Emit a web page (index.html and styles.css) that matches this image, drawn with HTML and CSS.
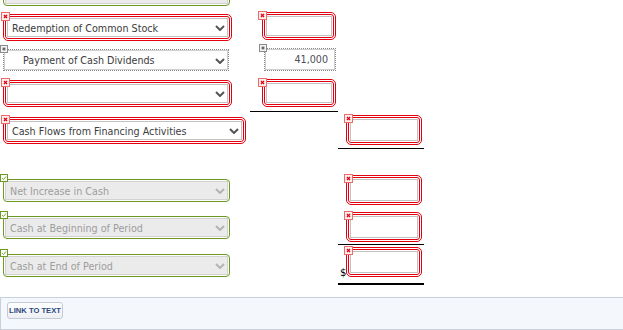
FILE: index.html
```html
<!DOCTYPE html>
<html lang="en">
<head>
    <meta charset="UTF-8">
    <title>Financing Activities</title>
    <link rel="stylesheet" href="styles.css">
</head>
<body>
    <div class="sheet">
        <div class="row r0">
            <div class="cell left">
                <div class="box ok w227 peek">
                    <div class="select dis"><span></span><svg class="chev" width="10" height="6" viewBox="0 0 10 6"><polyline points="1,1 5,5 9,1"/></svg></div>
                </div>
            </div>
        </div>

        <div class="row r1">
            <div class="cell left">
                <div class="box bad w229">
                    <i class="mark red"><svg viewBox="0 0 9 9"><path d="M2.5 2.5l4 4M6.5 2.5l-4 4"/></svg></i>
                    <div class="ring"><div class="select"><span>Redemption of Common Stock</span><svg class="chev" width="10" height="6" viewBox="0 0 10 6"><polyline points="1,1 5,5 9,1"/></svg></div></div>
                </div>
            </div>
            <div class="cell mid">
                <div class="box bad num">
                    <i class="mark red"><svg viewBox="0 0 9 9"><path d="M2.5 2.5l4 4M6.5 2.5l-4 4"/></svg></i>
                    <div class="ring"><div class="field"></div></div>
                </div>
            </div>
        </div>

        <div class="row r2">
            <div class="cell left">
                <div class="box dot w226">
                    <i class="mark grey"><svg viewBox="0 0 7 7"><path d="M2 2l3 3M5 2l-3 3"/></svg></i>
                    <div class="select indent"><span>Payment of Cash Dividends</span><svg class="chev" width="10" height="6" viewBox="0 0 10 6"><polyline points="1,1 5,5 9,1"/></svg></div>
                </div>
            </div>
            <div class="cell mid">
                <div class="box dot numdot">
                    <i class="mark grey"><svg viewBox="0 0 7 7"><path d="M2 2l3 3M5 2l-3 3"/></svg></i>
                    <div class="field filled">41,000</div>
                </div>
            </div>
        </div>

        <div class="row r3">
            <div class="cell left">
                <div class="box bad w229">
                    <i class="mark red"><svg viewBox="0 0 9 9"><path d="M2.5 2.5l4 4M6.5 2.5l-4 4"/></svg></i>
                    <div class="ring"><div class="select"><span></span><svg class="chev" width="10" height="6" viewBox="0 0 10 6"><polyline points="1,1 5,5 9,1"/></svg></div></div>
                </div>
            </div>
            <div class="cell mid total">
                <div class="box bad num">
                    <i class="mark red"><svg viewBox="0 0 9 9"><path d="M2.5 2.5l4 4M6.5 2.5l-4 4"/></svg></i>
                    <div class="ring"><div class="field"></div></div>
                </div>
            </div>
        </div>

        <div class="row r4">
            <div class="cell left">
                <div class="box bad w243">
                    <i class="mark red"><svg viewBox="0 0 9 9"><path d="M2.5 2.5l4 4M6.5 2.5l-4 4"/></svg></i>
                    <div class="ring"><div class="select"><span>Cash Flows from Financing Activities</span><svg class="chev" width="10" height="6" viewBox="0 0 10 6"><polyline points="1,1 5,5 9,1"/></svg></div></div>
                </div>
            </div>
            <div class="cell mid"></div>
            <div class="cell right total">
                <div class="box bad sum">
                    <i class="mark red"><svg viewBox="0 0 9 9"><path d="M2.5 2.5l4 4M6.5 2.5l-4 4"/></svg></i>
                    <div class="ring"><div class="field"></div></div>
                </div>
            </div>
        </div>

        <div class="spacer"></div>

        <div class="row r5">
            <div class="cell left">
                <div class="box ok w227">
                    <i class="mark green"><svg viewBox="0 0 8 8"><path d="M1.5 4.2l1.8 1.8 3.4-4"/></svg></i>
                    <div class="select dis"><span>Net Increase in Cash</span><svg class="chev" width="10" height="6" viewBox="0 0 10 6"><polyline points="1,1 5,5 9,1"/></svg></div>
                </div>
            </div>
            <div class="cell mid"></div>
            <div class="cell right">
                <div class="box bad sum">
                    <i class="mark red"><svg viewBox="0 0 9 9"><path d="M2.5 2.5l4 4M6.5 2.5l-4 4"/></svg></i>
                    <div class="ring"><div class="field"></div></div>
                </div>
            </div>
        </div>

        <div class="row r6">
            <div class="cell left">
                <div class="box ok w227">
                    <i class="mark green"><svg viewBox="0 0 8 8"><path d="M1.5 4.2l1.8 1.8 3.4-4"/></svg></i>
                    <div class="select dis"><span>Cash at Beginning of Period</span><svg class="chev" width="10" height="6" viewBox="0 0 10 6"><polyline points="1,1 5,5 9,1"/></svg></div>
                </div>
            </div>
            <div class="cell mid"></div>
            <div class="cell right total">
                <div class="box bad sum">
                    <i class="mark red"><svg viewBox="0 0 9 9"><path d="M2.5 2.5l4 4M6.5 2.5l-4 4"/></svg></i>
                    <div class="ring"><div class="field"></div></div>
                </div>
            </div>
        </div>

        <div class="row r7">
            <div class="cell left">
                <div class="box ok w227">
                    <i class="mark green"><svg viewBox="0 0 8 8"><path d="M1.5 4.2l1.8 1.8 3.4-4"/></svg></i>
                    <div class="select dis"><span>Cash at End of Period</span><svg class="chev" width="10" height="6" viewBox="0 0 10 6"><polyline points="1,1 5,5 9,1"/></svg></div>
                </div>
            </div>
            <div class="cell mid"></div>
            <div class="cell right grand">
                <span class="dollar">$</span>
                <div class="box bad sum">
                    <i class="mark red"><svg viewBox="0 0 9 9"><path d="M2.5 2.5l4 4M6.5 2.5l-4 4"/></svg></i>
                    <div class="ring"><div class="field"></div></div>
                </div>
            </div>
        </div>
    </div>

    <div class="footer">
        <button class="link-btn">LINK TO TEXT</button>
    </div>
</body>
</html>
```

FILE: styles.css
```css
body {
    margin: 0;
    font-family: "DejaVu Sans", Verdana, sans-serif;
    font-size: 9.6px;
    color: #3c3c3c;
    background: #fff;
    overflow: hidden;
}
.sheet {
    width: 424px;
}
.row {
    display: grid;
    grid-template-columns: 250px 88px 86px;
}
.cell {
    box-sizing: border-box;
    position: relative;
}
.left {
    padding-left: 3px;
}
.mid {
    padding-left: 12px;
}
.right {
    padding-left: 8px;
}
.total {
    border-bottom: 1px solid #000;
}
.grand {
    border-bottom: 2px solid #000;
}

/* row heights and offsets */
.r0 { height: 8px; }
.r1 { height: 36px; }
.r1 .left { padding-top: 6px; }
.r1 .mid { padding-top: 4px; }
.r2 { height: 32px; }
.r2 .left { padding-top: 5px; }
.r2 .mid { padding-top: 4px; }
.r3 { height: 36px; }
.r3 .left { padding-top: 4px; }
.r3 .mid { padding-top: 3px; }
.r4 { height: 37px; }
.r4 .left { padding-top: 5px; }
.r4 .right { padding-top: 3px; }
.spacer { height: 21px; }
.r5 { height: 37px; }
.r5 .left { padding-top: 9px; }
.r5 .right { padding-top: 5px; }
.r6 { height: 38px; }
.r6 .left { padding-top: 9px; }
.r6 .right { padding-top: 5px; }
.r7 { height: 40px; }
.r7 .left { padding-top: 9px; }
.r7 .right { padding-top: 2px; }

.peek {
    margin-top: -17px;
}

/* wrappers */
.box {
    position: relative;
    box-sizing: border-box;
}
.w226 { width: 226px; }
.w227 { width: 227px; }
.w229 { width: 229px; }
.w243 { width: 243px; }
.num { width: 74px; }
.numdot { width: 72px; margin-left: 2px; }
.sum { width: 76px; }

.bad {
    border: 1px solid #e3000f;
    border-radius: 5px;
    padding: 1px;
}
.bad .ring {
    border: 1px solid #e3000f;
    border-radius: 3px;
    padding: 1px;
}
.dot {
    border: 1px dotted #888;
}
.ok {
    border: 1px solid #6b9a23;
    border-radius: 4px;
    padding: 1px;
}

/* controls */
.select {
    box-sizing: border-box;
    height: 19px;
    border: 1px solid #c2c2c2;
    background: #fff;
    display: flex;
    align-items: center;
    justify-content: space-between;
    padding: 1px 2px 0 4px;
    white-space: nowrap;
}
.dot .select {
    height: 20px;
    border-color: #cdcdcd;
}
.select.indent {
    padding-left: 18px;
}
.select.dis {
    background: #ebebeb;
    border-color: #d2d2d2;
    color: #9d9d9d;
}
.chev {
    fill: none;
    stroke: #555;
    stroke-width: 2;
    flex: none;
}
.dis .chev {
    stroke: #b4b4b4;
}
.field {
    box-sizing: border-box;
    height: 20px;
    border: 1px solid #c2c2c2;
    background: #fff;
}
.sum .field {
    height: 22px;
}
.field.filled {
    height: 21px;
    border-color: #cdcdcd;
    text-align: right;
    line-height: 19px;
    padding-right: 6px;
    color: #4a4f5a;
}

/* status markers */
.mark {
    position: absolute;
    box-sizing: border-box;
    display: block;
    z-index: 1;
}
.mark svg {
    display: block;
    width: 100%;
    height: 100%;
}
.mark.red {
    width: 9px;
    height: 9px;
    left: -3px;
    top: -3px;
    border: 1px solid #ee6b6b;
    background: #fff0f0;
}
.mark.red path {
    stroke: #e3000f;
    stroke-width: 1.6;
}
.mid .mark.red {
    left: -5px;
    top: -2px;
}
.right .mark.red {
    left: -3px;
    top: -2px;
}
.mark.grey {
    width: 8px;
    height: 8px;
    left: -4px;
    top: -5px;
    border: 1px solid #8c8c8c;
    background: #f4f4f4;
}
.mid .mark.grey {
    left: -6px;
    top: -5px;
}
.mark.grey path {
    stroke: #666;
    stroke-width: 1.4;
}
.mark.green {
    width: 8px;
    height: 8px;
    left: -4px;
    top: -6px;
    border: 1px solid #6b9a23;
    background: #fff;
}
.mark.green path {
    fill: none;
    stroke: #5d9a1a;
    stroke-width: 1.2;
}

.dollar {
    position: absolute;
    left: 2px;
    top: 22px;
    color: #000;
    font-size: 10px;
}

/* bottom bar */
.footer {
    margin-top: 12px;
    height: 33px;
    box-sizing: border-box;
    border: 1px solid #c7d0dc;
    border-right: none;
    background: #f4f7fb;
    padding: 4px 0 0 6px;
}
.link-btn {
    font-family: "Liberation Sans", Arial, sans-serif;
    font-weight: bold;
    font-size: 7.6px;
    color: #2c4a7e;
    height: 17px;
    width: 56px;
    padding: 0;
    border: 1px solid #c3cad4;
    border-radius: 3px;
    background: linear-gradient(#ffffff, #eceff3);
}
```
